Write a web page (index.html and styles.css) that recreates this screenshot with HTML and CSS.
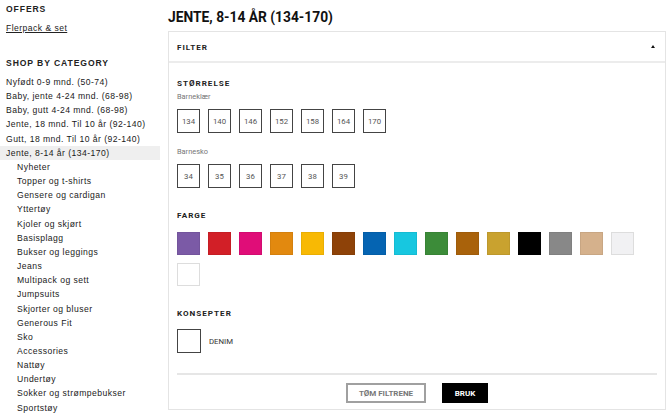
FILE: index.html
```html
<!DOCTYPE html>
<html lang="no">
<head>
<meta charset="utf-8">
<title>Jente, 8-14 år</title>
<link rel="stylesheet" href="styles.css">
</head>
<body>
<div class="page">
  <aside class="sidebar">
    <div class="side-head">OFFERS</div>
    <a class="side-link" href="#">Flerpack &amp; set</a>
    <div class="side-head cat-head">SHOP BY CATEGORY</div>
    <ul class="cat-list">
      <li>Nyfødt 0-9 mnd. (50-74)</li>
      <li>Baby, jente 4-24 mnd. (68-98)</li>
      <li>Baby, gutt 4-24 mnd. (68-98)</li>
      <li>Jente, 18 mnd. Til 10 år (92-140)</li>
      <li>Gutt, 18 mnd. Til 10 år (92-140)</li>
      <li class="active">Jente, 8-14 år (134-170)</li>
      <li class="sub">Nyheter</li>
      <li class="sub">Topper og t-shirts</li>
      <li class="sub">Gensere og cardigan</li>
      <li class="sub">Yttertøy</li>
      <li class="sub">Kjoler og skjørt</li>
      <li class="sub">Basisplagg</li>
      <li class="sub">Bukser og leggings</li>
      <li class="sub">Jeans</li>
      <li class="sub">Multipack og sett</li>
      <li class="sub">Jumpsuits</li>
      <li class="sub">Skjorter og bluser</li>
      <li class="sub">Generous Fit</li>
      <li class="sub">Sko</li>
      <li class="sub">Accessories</li>
      <li class="sub">Nattøy</li>
      <li class="sub">Undertøy</li>
      <li class="sub">Sokker og strømpebukser</li>
      <li class="sub">Sportstøy</li>
    </ul>
  </aside>
  <main class="main">
    <h1 class="title">JENTE, 8-14 ÅR (134-170)</h1>
    <section class="filter">
      <div class="filter-head">
        <span class="filter-title">FILTER</span>
        <span class="caret"></span>
      </div>
      <div class="filter-body">
        <div class="sec-title">STØRRELSE</div>
        <div class="sub-label first">Barneklær</div>
        <div class="sizes">
          <span class="size">134</span><span class="size">140</span><span class="size">146</span><span class="size">152</span><span class="size">158</span><span class="size">164</span><span class="size">170</span>
        </div>
        <div class="sub-label second">Barnesko</div>
        <div class="sizes">
          <span class="size">34</span><span class="size">35</span><span class="size">36</span><span class="size">37</span><span class="size">38</span><span class="size">39</span>
        </div>
        <div class="sec-title gap">FARGE</div>
        <div class="swatches">
          <span class="sw c1"></span><span class="sw c2"></span><span class="sw c3"></span><span class="sw c4"></span><span class="sw c5"></span><span class="sw c6"></span><span class="sw c7"></span><span class="sw c8"></span><span class="sw c9"></span><span class="sw c10"></span><span class="sw c11"></span><span class="sw c12"></span><span class="sw c13"></span><span class="sw c14"></span><span class="sw c15"></span><span class="sw c16"></span>
        </div>
        <div class="sec-title gap">KONSEPTER</div>
        <label class="concept"><span class="check"></span><span class="concept-name">DENIM</span></label>
        <div class="actions">
          <button class="btn btn-clear">TØM FILTRENE</button>
          <button class="btn btn-apply">BRUK</button>
        </div>
      </div>
    </section>
  </main>
</div>
</body>
</html>
```

FILE: styles.css
```css
html, body {
  margin: 0;
  padding: 0;
  background: #ffffff;
}
body {
  font-family: "Liberation Sans", Arial, sans-serif;
  color: #222;
}
.page {
  display: flex;
  width: 670px;
  height: 414px;
  overflow: hidden;
}
.sidebar {
  width: 160px;
  flex: none;
  padding-top: 2px;
}
.side-head {
  font-size: 8.6px;
  font-weight: bold;
  letter-spacing: 0.9px;
  line-height: 14px;
  padding-left: 6px;
  color: #222;
}
.side-link {
  display: block;
  margin-top: 5px;
  padding-left: 6px;
  font-size: 8.6px;
  letter-spacing: 0.45px;
  line-height: 14px;
  color: #222;
  text-decoration: underline;
}
.cat-head {
  margin-top: 21px;
}
.cat-list {
  list-style: none;
  margin: 5px 0 0 0;
  padding: 0;
}
.cat-list li {
  font-size: 8.6px;
  letter-spacing: 0.45px;
  line-height: 14.15px;
  padding-left: 6px;
  color: #1a1a1a;
  white-space: nowrap;
}
.cat-list li.active {
  background: #efefef;
}
.cat-list li.sub {
  padding-left: 17px;
}
.main {
  flex: 1;
  padding: 0 4px 0 8px;
  font-family: Roboto, "Liberation Sans", sans-serif;
}
.title {
  margin: 6px 0 3px 0;
  font-size: 13.8px;
  line-height: 22px;
  font-weight: 700;
  color: #111;
}
.filter {
  border: 1px solid #e4e4e4;
}
.filter-head {
  display: flex;
  justify-content: space-between;
  align-items: center;
  height: 29px;
  padding: 0 8px;
  border-bottom: 2px solid #ececec;
}
.filter-title, .sec-title {
  font-size: 8.1px;
  font-weight: 700;
  letter-spacing: 1px;
  color: #222;
}
.caret {
  width: 0;
  height: 0;
  border-left: 2.5px solid transparent;
  border-right: 2.5px solid transparent;
  border-bottom: 3.5px solid #111;
  margin-right: 2px;
}
.filter-body {
  padding: 14px 8px 6px 8px;
}
.sec-title {
  line-height: 12px;
}
.sec-title.gap {
  margin-top: 21px;
}
.sub-label {
  font-size: 7.4px;
  line-height: 12px;
  color: #777;
}
.sub-label.first {
  margin-top: 2px;
}
.sub-label.second {
  margin-top: 13px;
}
.sizes {
  display: flex;
  gap: 8px;
  margin-top: 6px;
}
.size {
  width: 23px;
  height: 24px;
  box-sizing: border-box;
  border: 1px solid #444;
  display: flex;
  align-items: center;
  justify-content: center;
  font-size: 7.8px;
  color: #555;
}
.swatches {
  display: flex;
  flex-wrap: wrap;
  gap: 8px;
  margin-top: 11px;
}
.sw {
  width: 23px;
  height: 23px;
  box-sizing: border-box;
  border: 1px solid rgba(0,0,0,0.06);
}
.c1 { background: #7b5aa6; }
.c2 { background: #d21f27; }
.c3 { background: #e00d78; }
.c4 { background: #e2890f; }
.c5 { background: #f8b904; }
.c6 { background: #8e4208; }
.c7 { background: #0564b2; }
.c8 { background: #17c7e0; }
.c9 { background: #3c8c39; }
.c10 { background: #a9620b; }
.c11 { background: #c9a22f; }
.c12 { background: #000000; }
.c13 { background: #888888; }
.c14 { background: #d5b18c; }
.c15 { background: #f1f1f3; border: 1px solid #dddddd; }
.c16 { background: #ffffff; border: 1px solid #dddddd; }
.concept {
  display: flex;
  align-items: center;
  gap: 8px;
  margin-top: 10px;
}
.check {
  width: 24px;
  height: 24px;
  box-sizing: border-box;
  border: 1px solid #444;
}
.concept-name {
  font-size: 7.8px;
  color: #333;
}
.actions {
  display: flex;
  justify-content: center;
  gap: 16px;
  margin-top: 20px;
  padding-top: 8px;
  border-top: 2px solid #e6e6e6;
}
.btn {
  height: 20px;
  box-sizing: border-box;
  font-family: Roboto, "Liberation Sans", sans-serif;
  font-size: 8px;
  font-weight: 700;
  padding: 0;
  cursor: pointer;
}
.btn-clear {
  width: 80px;
  background: #fff;
  border: 2px solid #a0a0a0;
  color: #777;
}
.btn-apply {
  width: 46px;
  background: #000;
  border: 1px solid #000;
  color: #fff;
}
```
